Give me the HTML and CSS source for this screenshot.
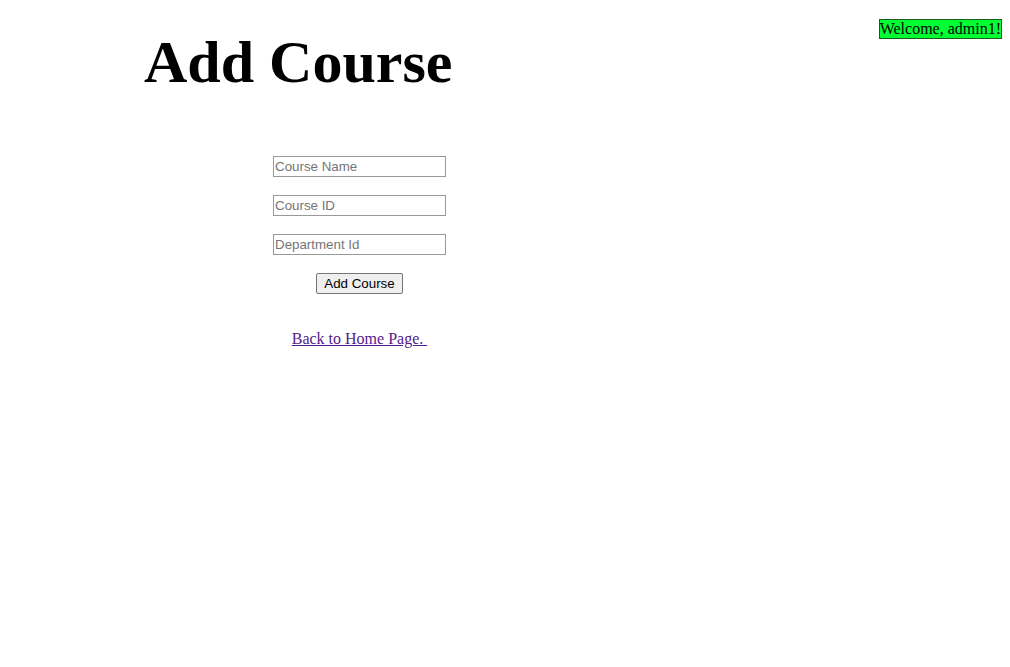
FILE: index.html
```html
<!DOCTYPE html>
<html>
<head>
<meta charset="utf-8">
<title>Add Course</title>
<link rel="stylesheet" href="styles.css">
</head>
<body>
<div class="welcome">Welcome, admin1!</div>
<main class="page">
  <h1 class="title">Add Course</h1>
  <form class="course-form">
    <input class="field" type="text" placeholder="Course Name">
    <input class="field" type="text" placeholder="Course ID">
    <input class="field" type="text" placeholder="Department Id">
    <button class="submit" type="submit">Add Course</button>
  </form>
  <a class="back" href="#">Back to Home Page. </a>
</main>
</body>
</html>
```
FILE: styles.css
```css
html, body {
  margin: 0;
  padding: 0;
  background: #ffffff;
}
body {
  padding: 8px;
  font-family: "Liberation Serif", "Times New Roman", serif;
  font-size: 16px;
  color: #000;
}
.welcome {
  float: right;
  margin-top: 11px;
  background: #00ff33;
  border: 1px solid #1a5e1a;
  line-height: 18px;
  padding: 0;
}
.page {
  width: 703px;
  display: flex;
  flex-direction: column;
  align-items: center;
}
.title {
  align-self: flex-start;
  margin: 20px 0 0 136px;
  font-size: 60px;
  font-weight: bold;
  line-height: 69px;
}
.course-form {
  margin-top: 59px;
  display: flex;
  flex-direction: column;
  align-items: center;
  gap: 18px;
}
.field {
  box-sizing: border-box;
  width: 173px;
  height: 21px;
  margin: 0;
  padding: 1px 1px;
  border: 1px solid #999;
  font-family: "Liberation Sans", Arial, sans-serif;
  font-size: 13.33px;
  color: #000;
  background: #fff;
  outline: none;
}
.field::placeholder {
  color: #757575;
}
.submit {
  box-sizing: border-box;
  height: 21px;
  padding: 1px 7px;
  margin: 0;
  font-family: "Liberation Sans", Arial, sans-serif;
  font-size: 13.33px;
  color: #000;
  background: #efefef;
  border: 1px solid #767676;
  border-radius: 2px;
}
.back {
  margin-top: 36px;
  color: #551a8b;
  text-decoration: underline;
  line-height: 18px;
  white-space: pre;
}
```
